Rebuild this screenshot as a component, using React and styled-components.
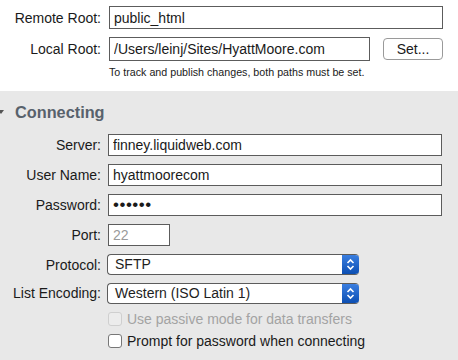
import React from 'react';
import styled, { createGlobalStyle } from 'styled-components';

const Global = createGlobalStyle`
  html, body {
    margin: 0;
    padding: 0;
    background: #e8e8e8;
    font-family: "Liberation Sans", Arial, sans-serif;
    font-size: 14px;
    color: #1e1e1e;
  }
`;

const Page = styled.div`
  width: 458px;
  height: 360px;
  overflow: hidden;
`;

const TopPane = styled.div`
  background: #fff;
  height: 91px;
  padding-top: 6px;
  box-sizing: border-box;
`;

const Grid = styled.div`
  display: grid;
  grid-template-columns: 101px 1fr;
  column-gap: ${p => p.$gap || 7}px;
  row-gap: ${p => p.$rowGap || 8}px;
  align-items: center;
`;

const Label = styled.label`
  text-align: right;
  white-space: nowrap;
  line-height: 16px;
  color: #1a1a1a;
`;

const Field = styled.input`
  box-sizing: border-box;
  width: ${p => p.$w || 334}px;
  height: ${p => p.$h || 22}px;
  border: 1px solid #5c5c5c;
  background: #fff;
  font-family: "Liberation Sans", Arial, sans-serif;
  font-size: ${p => (p.$dots ? 17 : 14)}px;
  letter-spacing: ${p => (p.$dots ? '0.5px' : 'normal')};
  color: ${p => (p.$muted ? '#9a9a9a' : '#1a1a1a')};
  padding: 0 4px;
  margin: 0;
  outline: none;
  border-radius: 0;
`;

const FieldRow = styled.div`
  display: flex;
  align-items: center;
  gap: 13px;
`;

const Button = styled.button`
  box-sizing: border-box;
  width: 60px;
  height: 22px;
  background: #fff;
  border: 1px solid #9a9a9a;
  border-radius: 4px;
  font-family: "Liberation Sans", Arial, sans-serif;
  font-size: 14px;
  color: #1a1a1a;
  padding: 0;
`;

const Hint = styled.div`
  grid-column: 2;
  font-size: 10.7px;
  line-height: 13px;
  margin-top: -3px;
  color: #1a1a1a;
`;

const Section = styled.div`
  padding-top: 11px;
`;

const Header = styled.div`
  display: flex;
  align-items: center;
  height: 20px;
  margin-bottom: 12px;
  font-size: 16.3px;
  font-weight: bold;
  color: #58626c;
`;

const Disclosure = styled.span`
  width: 15px;
  display: inline-flex;
  align-items: center;
  svg { display: block; margin-left: -2px; }
`;

const Popup = styled.div`
  box-sizing: border-box;
  width: 252px;
  height: 21px;
  display: flex;
  margin-left: -1px;
  border: 1px solid #5c5c5c;
  border-right: none;
  border-radius: 4px;
  background: #fff;
  overflow: hidden;
`;

const PopupText = styled.span`
  flex: 1;
  padding-left: 7px;
  line-height: 19px;
`;

const PopupArrows = styled.span`
  width: 17px;
  background: linear-gradient(#3a7ee0, #0c4fb3);
  display: flex;
  align-items: center;
  justify-content: center;
  svg { display: block; }
`;

const Check = styled.div`
  grid-column: 2;
  display: flex;
  align-items: center;
  gap: 5px;
  color: ${p => (p.$disabled ? '#a3a3a3' : '#1a1a1a')};
  line-height: 14px;
`;

const Box = styled.span`
  box-sizing: border-box;
  width: 14px;
  height: 14px;
  border: 1px solid ${p => (p.$disabled ? '#cfcfcf' : '#777')};
  border-radius: 3px;
  background: ${p => (p.$disabled ? '#ececec' : '#fff')};
`;

const Arrows = () => (
  <svg width="9" height="13" viewBox="0 0 9 13">
    <path d="M1.5 5 L4.5 2 L7.5 5 M1.5 8 L4.5 11 L7.5 8" stroke="#fff" strokeWidth="1.6" fill="none" />
  </svg>
);

const PopupButton = ({ value }) => (
  <Popup>
    <PopupText>{value}</PopupText>
    <PopupArrows><Arrows /></PopupArrows>
  </Popup>
);

export default function App() {
  return (
    <Page>
      <Global />
      <TopPane>
        <Grid $gap={8}>
          <Label>Remote Root:</Label>
          <Field readOnly value="public_html" $h={23} />
          <Label>Local Root:</Label>
          <FieldRow>
            <Field readOnly value="/Users/leinj/Sites/HyattMoore.com" $w={261} $h={24} />
            <Button>Set...</Button>
          </FieldRow>
          <Hint>To track and publish changes, both paths must be set.</Hint>
        </Grid>
      </TopPane>
      <Section>
        <Header>
          <Disclosure>
            <svg width="6" height="6" viewBox="0 0 6 6">
              <path d="M0 1 L6 1 L3 5 Z" fill="#555" />
            </svg>
          </Disclosure>
          Connecting
        </Header>
        <Grid>
          <Label>Server:</Label>
          <Field readOnly value="finney.liquidweb.com" />
          <Label>User Name:</Label>
          <Field readOnly value="hyattmoorecom" />
          <Label>Password:</Label>
          <Field readOnly type="password" value="secret" $dots />
          <Label>Port:</Label>
          <Field readOnly value="22" $w={62} $muted />
          <Label>Protocol:</Label>
          <PopupButton value="SFTP" />
          <Label style={{ marginTop: -1 }}>List Encoding:</Label>
          <PopupButton value="Western (ISO Latin 1)" />
          <Check $disabled><Box $disabled />Use passive mode for data transfers</Check>
          <Check><Box />Prompt for password when connecting</Check>
        </Grid>
      </Section>
    </Page>
  );
}
